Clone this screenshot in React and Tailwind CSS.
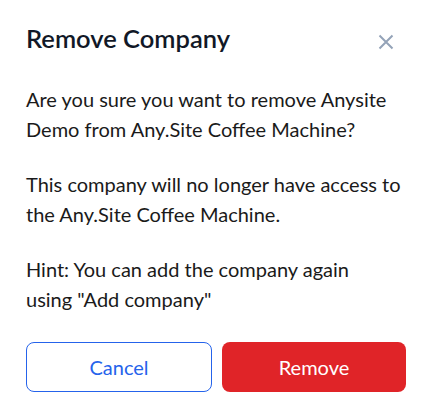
export default function App() {
  return (
    <div className="w-[434px] h-[418px] bg-white font-['Lato',_'Noto_Sans',_sans-serif] pl-[26px] pr-[28px] pt-[22px]">
      <div className="flex items-start justify-between">
        <h2 className="text-[25.5px] leading-8 font-semibold text-[#111827]">Remove Company</h2>
        <button className="mt-[12px] mr-[12px] text-[#94a3b8]" aria-label="Close">
          <svg width="16" height="16" viewBox="0 0 16 16" fill="none" stroke="currentColor" strokeWidth="2">
            <path d="M1.5 1.5L14.5 14.5M14.5 1.5L1.5 14.5" />
          </svg>
        </button>
      </div>

      <div className="mt-[31px] flex flex-col gap-[26px] text-[20px] leading-[29.5px] text-[#1a1a1a]">
        <p>Are you sure you want to remove Anysite Demo from Any.Site Coffee Machine?</p>
        <p>This company will no longer have access to the Any.Site Coffee Machine.</p>
        <p>
          Hint: You can add the company again
          <br />
          using "Add company"
        </p>
      </div>

      <div className="mt-[28px] flex gap-[10px]">
        <button className="flex-1 h-[50px] rounded-lg border border-[#2563eb] bg-white text-[20px] text-[#2563eb]">
          Cancel
        </button>
        <button className="flex-1 h-[50px] rounded-lg bg-[#e02428] text-[20px] text-white">
          Remove
        </button>
      </div>
    </div>
  );
}
